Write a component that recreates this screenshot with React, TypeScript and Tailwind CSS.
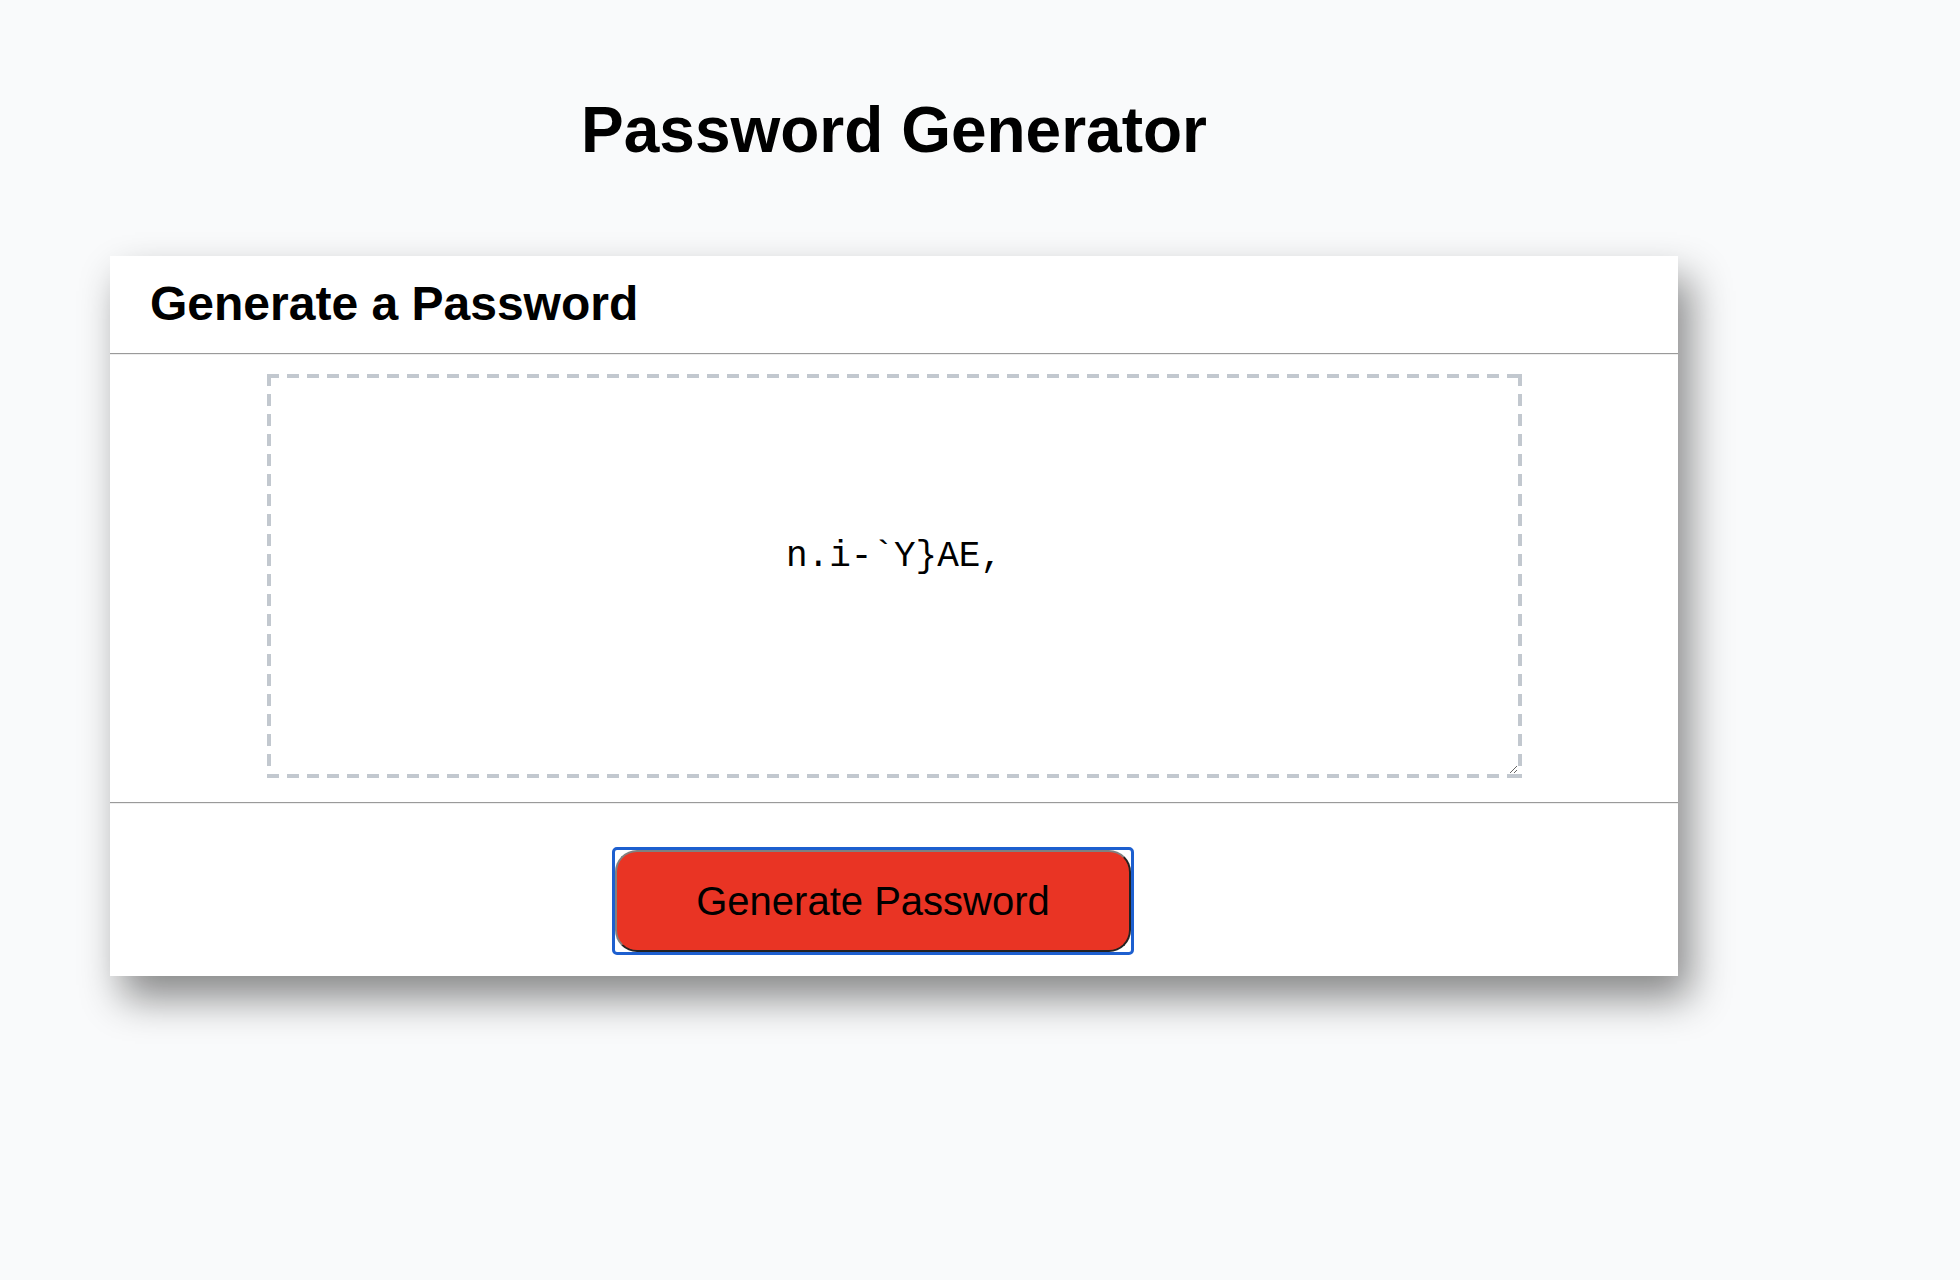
export default function App() {
  const password = "n.i-`Y}AE,";

  return (
    <div className="min-h-[1280px] w-full bg-[#f9fafb] font-['Liberation_Sans',Arial,sans-serif] text-black">
      <div className="ml-[110px] w-[1568px] pt-[98px]">
        <h1 className="text-center text-[64px] font-bold leading-none">Password Generator</h1>

        <div className="mt-[94px] bg-white shadow-[12px_22px_38px_rgba(0,0,0,0.46)]">
          {/* header */}
          <div className="pl-[40px] pt-[24px] pb-[25px]">
            <h2 className="text-[48px] font-bold leading-none">Generate a Password</h2>
          </div>
          <div className="border-t border-b border-t-[#9a9a9a] border-b-[#eeeeee]" />

          {/* body */}
          <div className="flex justify-center pt-[19px] pb-[24px]">
            <textarea
              readOnly
              value={password}
              className="block h-[404px] w-[1255px] border-4 border-transparent bg-white bg-no-repeat [background-origin:border-box] [background-image:repeating-linear-gradient(90deg,#c2c8cf_0_12px,transparent_12px_20px),repeating-linear-gradient(90deg,#c2c8cf_0_12px,transparent_12px_20px),repeating-linear-gradient(180deg,#c2c8cf_0_12px,transparent_12px_20px),repeating-linear-gradient(180deg,#c2c8cf_0_12px,transparent_12px_20px)] [background-size:100%_4px,100%_4px,4px_100%,4px_100%] [background-position:0_0,0_100%,0_0,100%_0] pt-[159px] text-center font-['Liberation_Mono','Courier_New',monospace] text-[36px] leading-[40px] text-black outline-none"
            />
          </div>
          <div className="border-t border-b border-t-[#9a9a9a] border-b-[#eeeeee]" />

          {/* footer */}
          <div className="flex justify-center pt-[43px] pb-[21px]">
            <div className="mr-[42px] h-[108px] w-[522px] rounded-[5px] border-[3px] border-[#1d5fcf] bg-white">
              <button className="flex h-full w-full items-center justify-center rounded-[22px] border-2 border-t-[#808080] border-l-[#808080] border-r-[#222222] border-b-[#222222] bg-[#e93424] text-[40px] leading-none text-black">
                Generate Password
              </button>
            </div>
          </div>
        </div>
      </div>
    </div>
  );
}
